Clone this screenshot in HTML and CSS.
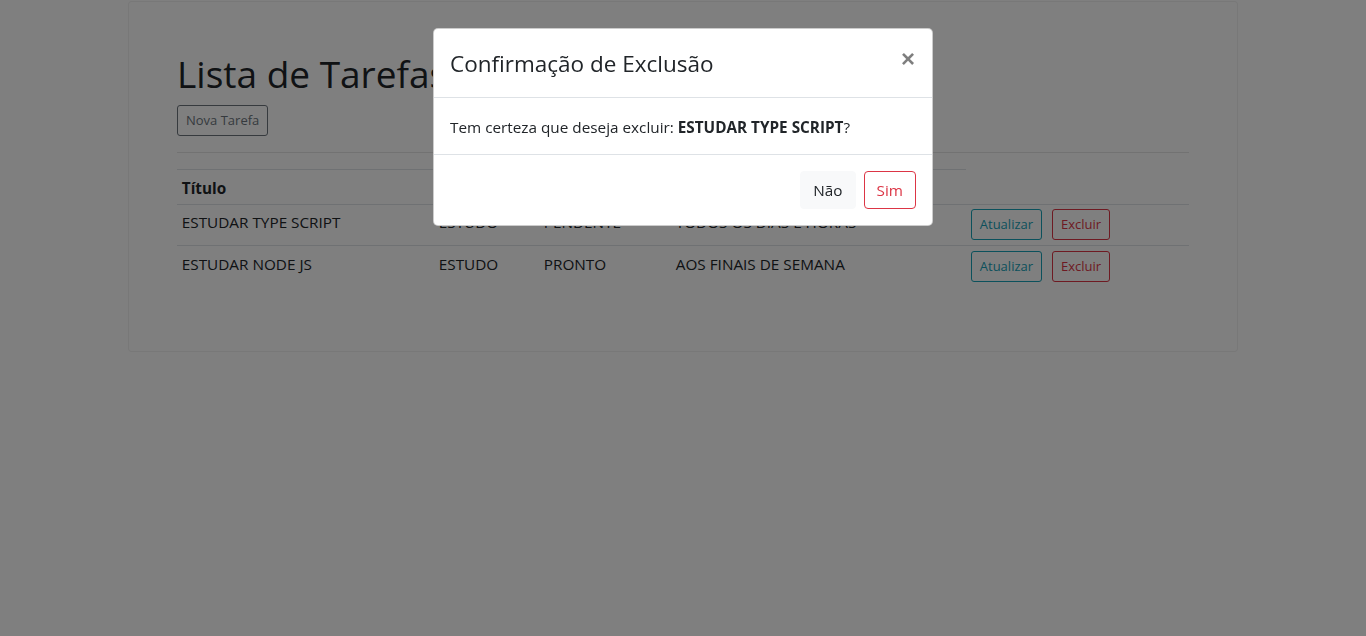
FILE: index.html
```html
<!DOCTYPE html>
<html lang="pt-BR">
<head>
<meta charset="utf-8">
<title>Lista de Tarefas</title>
<link rel="stylesheet" href="styles.css">
</head>
<body>
<div class="container">
  <div class="card">
    <h1 class="page-title">Lista de Tarefas</h1>
    <button class="btn btn-sm btn-outline-secondary">Nova Tarefa</button>
    <hr class="divider">
    <table class="table">
      <colgroup>
        <col class="c1"><col class="c2"><col class="c3"><col class="c4"><col class="c5">
      </colgroup>
      <thead>
        <tr>
          <th>Título</th><th>Tipo</th><th>Status</th><th>Descrição</th><th class="th-empty"></th>
        </tr>
      </thead>
      <tbody>
        <tr>
          <td>ESTUDAR TYPE SCRIPT</td><td>ESTUDO</td><td>PENDENTE</td><td>TODOS OS DIAS E HORAS</td>
          <td class="cell-actions"><div class="actions"><button class="btn btn-sm btn-outline-info">Atualizar</button><button class="btn btn-sm btn-outline-danger">Excluir</button></div></td>
        </tr>
        <tr>
          <td>ESTUDAR NODE JS</td><td>ESTUDO</td><td>PRONTO</td><td>AOS FINAIS DE SEMANA</td>
          <td class="cell-actions"><div class="actions"><button class="btn btn-sm btn-outline-info">Atualizar</button><button class="btn btn-sm btn-outline-danger">Excluir</button></div></td>
        </tr>
      </tbody>
    </table>
  </div>
</div>

<div class="backdrop"></div>

<div class="modal">
  <div class="modal-dialog">
    <div class="modal-content">
      <div class="modal-header">
        <h4 class="modal-title">Confirmação de Exclusão</h4>
        <button class="close" aria-label="Close">×</button>
      </div>
      <div class="modal-body">
        Tem certeza que deseja excluir: <strong>ESTUDAR TYPE SCRIPT</strong>?
      </div>
      <div class="modal-footer">
        <button class="btn btn-light">Não</button>
        <button class="btn btn-outline-danger">Sim</button>
      </div>
    </div>
  </div>
</div>
</body>
</html>
```

FILE: styles.css
```css
* { box-sizing: border-box; }

html, body { margin: 0; padding: 0; }

body {
  font-family: "Open Sans", "Noto Sans", sans-serif;
  font-size: 15.3px;
  line-height: 24px;
  color: #212529;
  background: #fff;
}

.container {
  width: 1140px;
  margin: 0 auto;
  padding: 1px 15px 0;
}

.card {
  border: 1px solid rgba(0, 0, 0, 0.06);
  border-radius: 4px;
  padding: 48px;
  background: #fff;
}

.page-title {
  margin: 0 0 7px;
  font-size: 37px;
  line-height: 48px;
  font-weight: 400;
}

.btn {
  display: inline-block;
  font-family: inherit;
  font-weight: 400;
  background: transparent;
  border: 1px solid transparent;
  border-radius: 4px;
  padding: 6px 12px;
  font-size: 15.3px;
  line-height: 24px;
  cursor: pointer;
}

.btn-sm {
  padding: 4px 8px;
  font-size: 13px;
  line-height: 21px;
  border-radius: 3px;
}

.btn-outline-secondary { color: #6c757d; border-color: #6c757d; }
.btn-outline-info { color: #17a2b8; border-color: #17a2b8; }
.btn-outline-danger { color: #dc3545; border-color: #dc3545; }
.btn-light { color: #212529; background: #f8f9fa; border-color: #f8f9fa; }

.divider {
  margin: 16px 0;
  border: 0;
  border-top: 1px solid rgba(0, 0, 0, 0.1);
  height: 0;
}

.table {
  width: 100%;
  table-layout: fixed;
  border-collapse: collapse;
  margin-bottom: 16px;
}

.c1 { width: 257px; }
.c2 { width: 105px; }
.c3 { width: 132px; }
.c4 { width: 295px; }
.c5 { width: 223px; }

.table th,
.table td {
  padding: 5.5px 4.8px 4.1px;
  text-align: left;
  vertical-align: top;
  border-top: 1px solid #dee2e6;
  white-space: nowrap;
}

.table td.cell-actions { padding: 4.8px; }

.table th { font-weight: 700; }
.table th.th-empty { border-top: 0; }

.actions {
  display: flex;
  gap: 10px;
}

.backdrop {
  position: fixed;
  inset: 0;
  background: rgba(0, 0, 0, 0.5);
}

.modal {
  position: fixed;
  inset: 0;
}

.modal-dialog {
  width: 500px;
  margin: 28px auto;
}

.modal-content {
  background: #fff;
  border: 1px solid rgba(0, 0, 0, 0.2);
  border-radius: 5px;
}

.modal-header {
  display: flex;
  align-items: flex-start;
  justify-content: space-between;
  padding: 17px 16px 15px;
  border-bottom: 1px solid #dee2e6;
}

.modal-title {
  margin: 0;
  font-size: 22.5px;
  line-height: 36px;
  font-weight: 400;
}

.close {
  padding: 18px 17px 14px 16px;
  margin: -17px -16px -15px auto;
  background: transparent;
  border: 0;
  font-family: "Liberation Sans", Arial, sans-serif;
  font-size: 24px;
  font-weight: 700;
  line-height: 24px;
  color: #000;
  opacity: 0.5;
  text-shadow: 0 1px 0 #fff;
  cursor: pointer;
}

.modal-body {
  padding: 17px 16px 15px;
}

.modal-body strong { font-weight: 700; }

.modal-footer {
  display: flex;
  justify-content: flex-end;
  align-items: center;
  padding: 12px;
  border-top: 1px solid #dee2e6;
}

.modal-footer .btn { margin: 4px; }
```
